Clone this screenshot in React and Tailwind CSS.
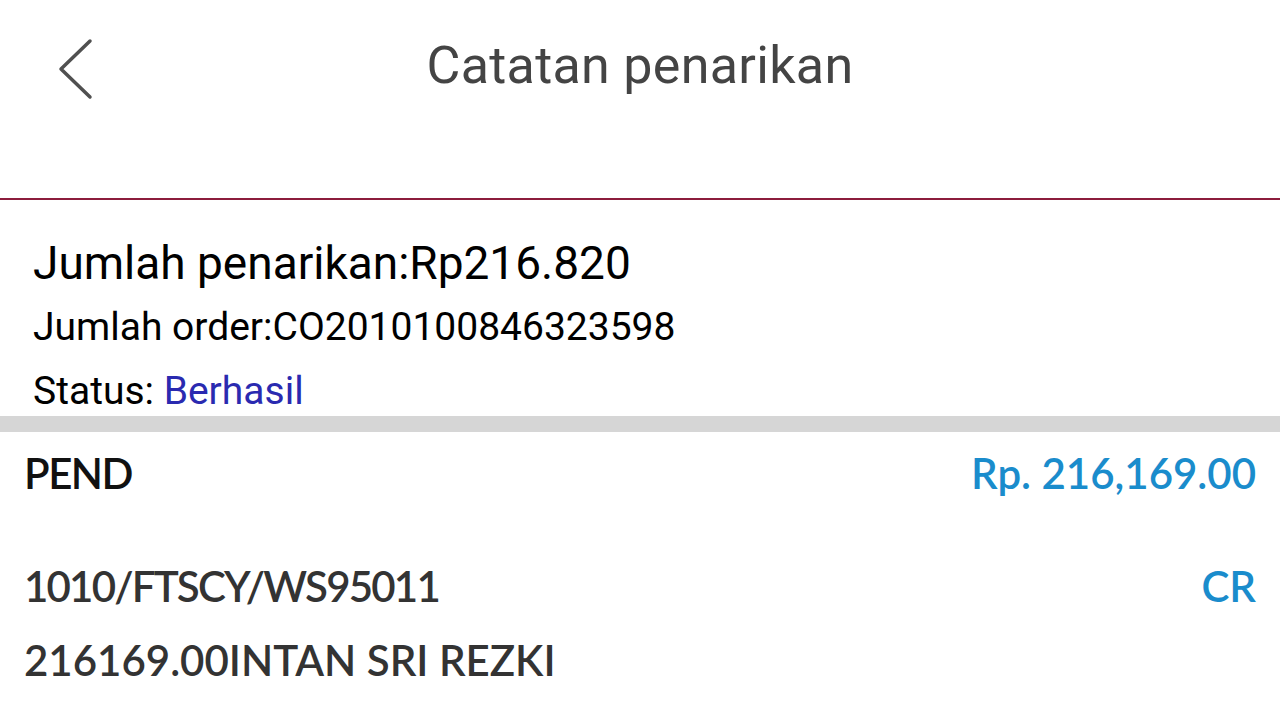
export default function App() {
  return (
    <div className="w-[1280px] h-[720px] bg-white overflow-hidden" style={{ fontFamily: 'Roboto, "Liberation Sans", sans-serif' }}>
      {/* header */}
      <div className="relative h-[200px] border-b-2 border-[#8c1c3c]">
        <div className="flex items-center h-[138px] px-[56px]">
          <svg width="40" height="62" viewBox="0 0 40 62" fill="none" stroke="#505050" strokeWidth="3.5" strokeLinecap="round" strokeLinejoin="round">
            <path d="M34 3 L5 31 L34 59" />
          </svg>
        </div>
        <div className="absolute top-0 left-0 right-0 h-[132px] flex items-center justify-center">
          <span className="text-[52px] leading-none text-[#444] tracking-[0.3px]">Catatan penarikan</span>
        </div>
      </div>

      {/* summary */}
      <div className="px-[33px] pt-[31px] text-black">
        <div className="text-[46px] leading-[64px] h-[64px]">Jumlah penarikan:Rp216.820</div>
        <div className="text-[39px] leading-[64px] h-[64px]">Jumlah order:CO2010100846323598</div>
        <div className="text-[39px] leading-[64px] h-[57px]">
          Status: <span className="text-[#2a2ab0]">Berhasil</span>
        </div>
      </div>
      <div className="h-[16px] bg-[#d6d6d6]" />

      {/* detail */}
      <div className="px-[24px] font-semibold text-[42px]" style={{ fontFamily: 'Lato, "Noto Sans", sans-serif' }}>
        <div className="flex justify-between items-center h-[82px]">
          <span className="text-[#111] tracking-[-1.5px]">PEND</span>
          <span className="text-[#1a8ccc]">Rp. 216,169.00</span>
        </div>
        <div className="flex justify-between items-center h-[76px] mt-[34px]">
          <span className="text-[#333] tracking-[-1.8px]">1010/FTSCY/WS95011</span>
          <span className="text-[#1a8ccc]">CR</span>
        </div>
        <div className="flex items-center h-[72px] text-[#333]">216169.00INTAN SRI REZKI</div>
      </div>
    </div>
  );
}
